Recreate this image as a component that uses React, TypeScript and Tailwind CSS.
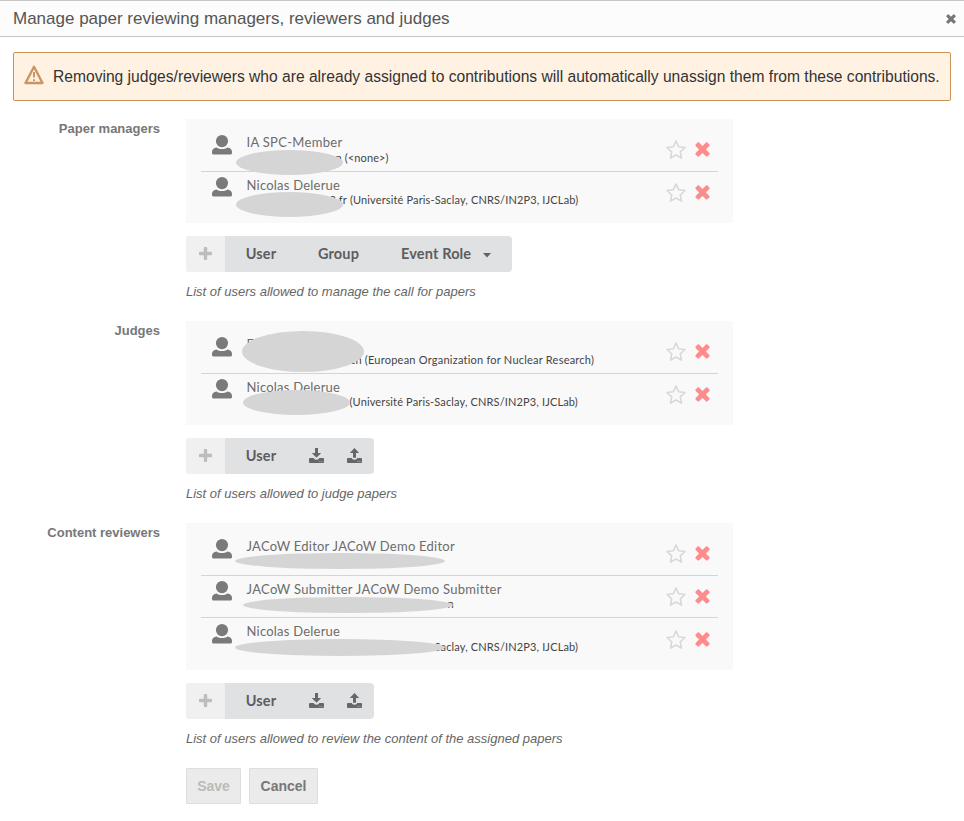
import React from "react";

type Person = {
  name: string;
  nameClass: string;
  lead?: string;
  detail?: string;
  detailClass?: string;
  actionsClass: string;
  blobClass: string;
  rowClass: string;
};

const UserIcon = () => (
  <svg viewBox="0 0 20 20" className="h-5 w-5 fill-[#7a7a7a]">
    <circle cx="10" cy="6.1" r="6.1" />
    <path d="M4.600 12.500c1.500 1.100 3.300 1.600 5.400 1.600s3.900-.5 5.400-1.600C18.400 12.600 20 14.600 20 17v1c0 .9-.6 1.500-1.500 1.500h-17C.6 19.500 0 18.900 0 18v-1c0-2.400 1.600-4.400 4.600-4.500z" />
  </svg>
);

const StarIcon = () => (
  <svg viewBox="0 0 20 19" className="h-[19px] w-5 fill-none stroke-[#d8d8d8] stroke-[1.6]" strokeLinejoin="round">
    <path d="M10 1l2.600 5.700 6.400.8-4.700 4.300 1.200 6.300L10 15l-5.500 3.100 1.200-6.300L1 7.500l6.400-.8z" />
  </svg>
);

const CrossIcon = ({ className }: { className: string }) => (
  <svg viewBox="0 0 16 16" className={className}>
    <path d="M4.300.6L8 4.300 11.700.6c.5-.5 1-.5 1.500 0l2.100 2.100c.5.5.5 1 0 1.500L11.600 8l3.700 3.700c.5.5.5 1 0 1.500l-2.100 2.100c-.5.5-1 .5-1.500 0L8 11.700l-3.700 3.600c-.5.5-1 .5-1.500 0L.7 13.200c-.5-.5-.5-1 0-1.500L4.400 8 .7 4.200c-.5-.5-.5-1 0-1.500L2.800.6c.5-.5 1-.5 1.500 0z" />
  </svg>
);

const PlusIcon = () => (
  <svg viewBox="0 0 13 13" className="-mt-px h-[13px] w-[13px] fill-[#bdbdbd]">
    <path d="M5.700 0h1.600c.6 0 .9.3.9.9v3.900h3.900c.6 0 .9.3.9.9v1.600c0 .6-.3.9-.9.9H8.200v3.900c0 .6-.3.900-.9.900H5.700c-.6 0-.9-.3-.9-.9V8.200H.9c-.6 0-.9-.3-.9-.9V5.700c0-.6.3-.9.900-.9h3.900V.9c0-.6.3-.9.900-.9z" />
  </svg>
);

const TransferIcon = ({ up = false }: { up?: boolean }) => (
  <svg viewBox="0 0 15 15" className="-mt-px h-[15px] w-[15px] fill-[#666769]">
    <path d={up ? "M7.500 0l4.700 4.900H9V9.800H6V4.900H2.800z" : "M6 0h3v5h3.200L7.500 9.800 2.800 5H6z"} />
    <path
      fillRule="evenodd"
      d="M.9 10h3.800l.6 1c.4.5 1.200.8 2.200.8s1.800-.3 2.200-.8l.6-1h3.800c.6 0 .9.4.9.9v3.200c0 .5-.3.900-.9.900H.9c-.6 0-.9-.4-.9-.9v-3.200c0-.5.3-.9.900-.9zm9.600 3v.7h.8V13zm2 0v.7h.8V13z"
    />
  </svg>
);

const PersonRow = ({ p }: { p: Person }) => (
  <div className={`relative flex border-[#d4d4d5] pl-[11px] ${p.rowClass}`}>
    <div className="mt-[5px] h-5 w-5 shrink-0">
      <UserIcon />
    </div>
    <div className="ml-[14.5px] flex-1 pt-[3px] font-['Lato',sans-serif] whitespace-nowrap">
      <div className={`h-[18px] text-[13px] leading-[18px] text-[#6c6c6c] ${p.nameClass}`}>{p.name}</div>
      <div className={`flex h-[14px] text-[11px] leading-[14px] text-[#444] ${p.detailClass ?? ""}`}>
        {p.lead && <span className="mr-[3px]">{p.lead}</span>}
        {p.detail}
      </div>
    </div>
    <div className={`mr-2 flex h-[19px] items-center gap-[9px] ${p.actionsClass}`}>
      <StarIcon />
      <CrossIcon className="h-[15px] w-[15px] fill-[#ff8c8c]" />
    </div>
    <div className={`absolute rounded-[50%] bg-[#d5d5d5] ${p.blobClass}`} />
  </div>
);

const Panel = ({ people, className }: { people: Person[]; className: string }) => (
  <div className={`w-[547px] bg-[#f9f9f9] px-[15px] pt-[11px] ${className}`}>
    {people.map((p, i) => (
      <PersonRow key={i} p={p} />
    ))}
  </div>
);

const btnText = "pb-px font-['Lato',sans-serif] text-[14.5px] leading-[21px] font-bold text-[#5c5d5f]";

const AddBar = ({ full = false }: { full?: boolean }) => (
  <div className="mt-[13px] flex h-9 w-fit overflow-hidden rounded-[4px] bg-[#e0e1e2]">
    <div className="flex w-[39px] items-center justify-center bg-[#f0f0f0]">
      <PlusIcon />
    </div>
    <div className={`flex w-[72px] items-center justify-center tracking-[0.15px] ${btnText}`}>User</div>
    {full ? (
      <>
        <div className={`flex w-[83px] items-center justify-center tracking-[0.15px] ${btnText}`}>Group</div>
        <div className={`flex w-[132px] items-center pl-[21px] tracking-[0.15px] ${btnText}`}>
          <span className="w-[82px]">Event Role</span>
          <svg viewBox="0 0 8 5" className="mt-[3px] h-[5px] w-[8px] fill-[#606163]">
            <path d="M0 0h8L4 4.500z" />
          </svg>
        </div>
      </>
    ) : (
      <>
        <div className="flex w-[38px] items-center justify-center">
          <TransferIcon />
        </div>
        <div className="flex w-[39px] items-center justify-center">
          <TransferIcon up />
        </div>
      </>
    )}
  </div>
);

const Section = ({
  label,
  people,
  panelClass,
  hint,
  full,
}: {
  label: string;
  people: Person[];
  panelClass: string;
  hint: string;
  full?: boolean;
}) => (
  <div className="flex">
    <div className="w-[160px] pt-[1px] text-right text-[13px] leading-[18px] font-bold text-[#777]">{label}</div>
    <div className="ml-[26px]">
      <Panel people={people} className={panelClass} />
      <AddBar full={full} />
      <div className="mt-[11px] h-[18px] text-[13px] leading-[18px] whitespace-nowrap text-[#666] italic">{hint}</div>
    </div>
  </div>
);

const managers: Person[] = [
  {
    name: "IA SPC-Member",
    nameClass: "tracking-[0.3px]",
    lead: "n",
    detail: "(<none>)",
    detailClass: "pl-[89px] tracking-[0.12px]",
    actionsClass: "mt-[10px]",
    blobClass: "left-[35px] top-[20px] z-10 h-[25px] w-[107px]",
    rowClass: "h-[42px] border-b",
  },
  {
    name: "Nicolas Delerue",
    nameClass: "pt-px tracking-[0.22px]",
    lead: "3.fr",
    detail: "(Université Paris-Saclay, CNRS/IN2P3, IJCLab)",
    detailClass: "pl-[83px] tracking-[0.14px]",
    actionsClass: "mt-[11px]",
    blobClass: "left-[35px] top-[20px] h-[25px] w-[107px]",
    rowClass: "h-[43px]",
  },
];

const judges: Person[] = [
  {
    name: "D",
    nameClass: "",
    lead: "ch",
    detail: "(European Organization for Nuclear Research)",
    detailClass: "pl-[103.5px] tracking-[0.23px]",
    actionsClass: "mt-[10px]",
    blobClass: "left-[41px] -top-[1px] h-[41px] w-[122px]",
    rowClass: "h-[42px] border-b",
  },
  {
    name: "Nicolas Delerue",
    nameClass: "pt-px tracking-[0.22px]",
    detail: "(Université Paris-Saclay, CNRS/IN2P3, IJCLab)",
    detailClass: "pl-[103px] tracking-[0.14px]",
    actionsClass: "mt-[11px]",
    blobClass: "left-[41.5px] top-[16px] h-[25px] w-[107px]",
    rowClass: "h-[43px]",
  },
];

const reviewers: Person[] = [
  {
    name: "JACoW Editor JACoW Demo Editor",
    nameClass: "tracking-[0.25px]",
    actionsClass: "mt-[10px]",
    blobClass: "left-[34px] top-[19px] h-[16px] w-[210px]",
    rowClass: "h-[42px] border-b",
  },
  {
    name: "JACoW Submitter JACoW Demo Submitter",
    nameClass: "pt-px tracking-[0.3px]",
    detail: "n",
    detailClass: "pl-[201px]",
    actionsClass: "mt-[11px]",
    blobClass: "left-[42px] top-[21px] h-[16px] w-[210px]",
    rowClass: "h-[42px] border-b",
  },
  {
    name: "Nicolas Delerue",
    nameClass: "tracking-[0.22px]",
    detail: "Saclay, CNRS/IN2P3, IJCLab)",
    detailClass: "pl-[188px] tracking-[0.14px]",
    actionsClass: "mt-[11px]",
    blobClass: "left-[34px] top-[21px] h-[17px] w-[210px]",
    rowClass: "h-[43px] pt-px",
  },
];

export default function App() {
  return (
    <div className="h-[821px] w-[964px] overflow-hidden bg-white font-['Liberation_Sans',Arial,sans-serif]">
      <div className="flex h-[37px] items-center justify-between border-y border-[#c6c6c6] bg-[#fcfcfc] pr-[8px] pl-[13px]">
        <h1 className="text-[17px] whitespace-nowrap text-[#555]">Manage paper reviewing managers, reviewers and judges</h1>
        <CrossIcon className="mt-[1px] h-[10px] w-[10px] fill-[#777]" />
      </div>
      <div className="mx-[13px] mt-[15px] flex h-[49px] items-center rounded-[2px] border border-[#cb9259] bg-[#fff2e3] pl-[10px]">
        <svg viewBox="0 0 20 20" className="-mt-1 h-5 w-5 fill-none stroke-[#cb9562]" strokeLinejoin="round">
          <path d="M10 1.800l8.500 16.200h-17z" strokeWidth="2.400" />
          <path d="M10 7v5.500M10 14.300v1.800" strokeWidth="2" />
        </svg>
        <p className="ml-[9px] text-[15.62px] whitespace-nowrap text-[#333]">
          Removing judges/reviewers who are already assigned to contributions will automatically unassign them from these contributions.
        </p>
      </div>
      <div className="mt-[18px] flex flex-col gap-5">
        <Section label="Paper managers" people={managers} panelClass="h-[104px]" hint="List of users allowed to manage the call for papers" full />
        <Section label="Judges" people={judges} panelClass="h-[104px]" hint="List of users allowed to judge papers" />
        <Section
          label="Content reviewers"
          people={reviewers}
          panelClass="h-[147px]"
          hint="List of users allowed to review the content of the assigned papers"
        />
      </div>
      <div className="mt-5 ml-[186px] flex gap-2 text-[14px] font-bold">
        <button className="h-9 w-[55px] rounded-[1px] border border-[#dedede] bg-[#ebebeb] text-[#bababa]">Save</button>
        <button className="h-9 w-[69px] rounded-[1px] border border-[#dedede] bg-[#ebebeb] text-[#777]">Cancel</button>
      </div>
    </div>
  );
}
